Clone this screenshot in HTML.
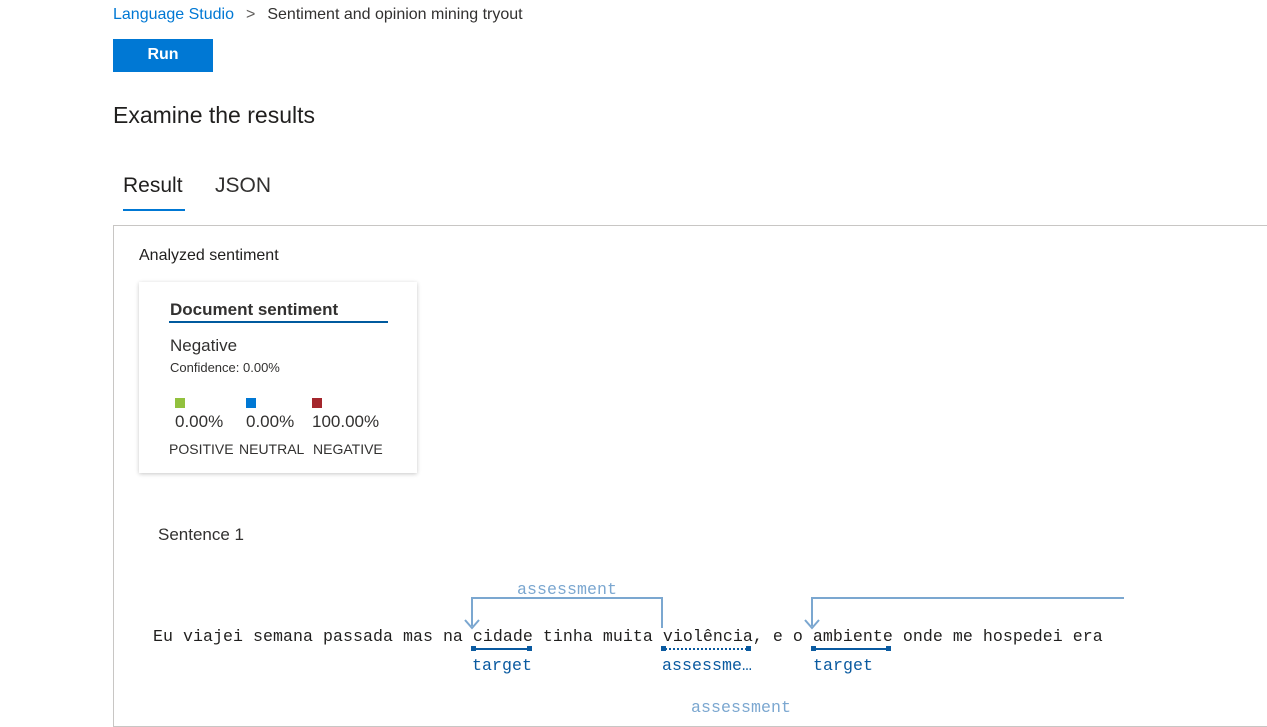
<!DOCTYPE html>
<html><head><meta charset="utf-8"><style>
body{margin:0;width:1267px;height:714px;overflow:hidden;background:#fff;font-family:"Liberation Sans",sans-serif;color:#323130;position:relative}
.a{position:absolute;white-space:nowrap}
.m{font-family:"Liberation Mono",monospace;font-size:16.6px;letter-spacing:0.04px}
</style></head><body>
<div class="a" style="left:113px;top:6px;font-size:16px"><span style="color:#0078d4">Language Studio</span><span style="margin:0 12px;color:#605e5c">&gt;</span>Sentiment and opinion mining tryout</div>
<div class="a" style="left:113px;top:39px;width:100px;height:33px;background:#0078d4;color:#fff;font-size:16px;font-weight:bold;text-align:center;line-height:31px">Run</div>
<div class="a" style="left:113px;top:102px;font-size:23px;color:#201f1e">Examine the results</div>
<div class="a" style="left:123px;top:174px;font-size:21px;color:#201f1e">Result</div>
<div class="a" style="left:123px;top:209px;width:62px;height:2px;background:#0078d4"></div>
<div class="a" style="left:215px;top:174px;font-size:21px">JSON</div>
<div class="a" style="left:113px;top:225px;width:1160px;height:500px;border:1px solid #c8c6c4;border-right:none"></div>
<div class="a" style="left:139px;top:247px;font-size:16px;color:#201f1e">Analyzed sentiment</div>
<div class="a" style="left:139px;top:282px;width:278px;height:191px;box-shadow:0 1px 4px rgba(0,0,0,.22);background:#fff"></div>
<div class="a" style="left:170px;top:300px;font-size:17px;font-weight:bold">Document sentiment</div>
<div class="a" style="left:169px;top:321px;width:219px;height:2px;background:#005a9e"></div>
<div class="a" style="left:170px;top:336px;font-size:17px">Negative</div>
<div class="a" style="left:170px;top:360px;font-size:13px">Confidence: 0.00%</div>
<div class="a" style="left:175px;top:398px;width:10px;height:10px;background:#92c13e"></div>
<div class="a" style="left:246px;top:398px;width:10px;height:10px;background:#0078d4"></div>
<div class="a" style="left:312px;top:398px;width:10px;height:10px;background:#a4262c"></div>
<div class="a" style="left:175px;top:412px;font-size:17px">0.00%</div>
<div class="a" style="left:246px;top:412px;font-size:17px">0.00%</div>
<div class="a" style="left:312px;top:412px;font-size:17px">100.00%</div>
<div class="a" style="left:169px;top:441px;font-size:14px">POSITIVE</div>
<div class="a" style="left:239px;top:441px;font-size:14px">NEUTRAL</div>
<div class="a" style="left:313px;top:441px;font-size:14px">NEGATIVE</div>
<div class="a" style="left:158px;top:525px;font-size:17px">Sentence 1</div>
<svg class="a" style="left:0;top:0" width="1267" height="714">
<g fill="none" stroke="#7ba7d0" stroke-width="2">
<path d="M662 628V598H472V626M465 620L472 628L479 620"/>
<path d="M1124 598H812V626M805 620L812 628L819 620"/>
</g>
<g stroke="#0a5aa0" stroke-width="2"><path d="M473 649H530M663 649H750M813 649H890" /></g>
<path d="M663 649H750" stroke="#fff" stroke-width="2" stroke-dasharray="2 2"/>
<g fill="#0a5aa0"><rect x="471" y="646" width="5" height="5"/><rect x="527" y="646" width="5" height="5"/><rect x="661" y="646" width="5" height="5"/><rect x="746" y="646" width="5" height="5"/><rect x="811" y="646" width="5" height="5"/><rect x="886" y="646" width="5" height="5"/></g>
</svg>
<div class="a m" style="left:517px;top:580px;color:#7ba7d0">assessment</div>
<div class="a m" style="left:153px;top:627px;color:#201f1e">Eu viajei semana passada mas na cidade tinha muita violência, e o ambiente onde me hospedei era</div>
<div class="a m" style="left:472px;top:656px;color:#0a5aa0">target</div>
<div class="a m" style="left:662px;top:656px;color:#0a5aa0">assessme…</div>
<div class="a m" style="left:813px;top:656px;color:#0a5aa0">target</div>
<div class="a m" style="left:691px;top:698px;color:#7ba7d0">assessment</div>
</body></html>
